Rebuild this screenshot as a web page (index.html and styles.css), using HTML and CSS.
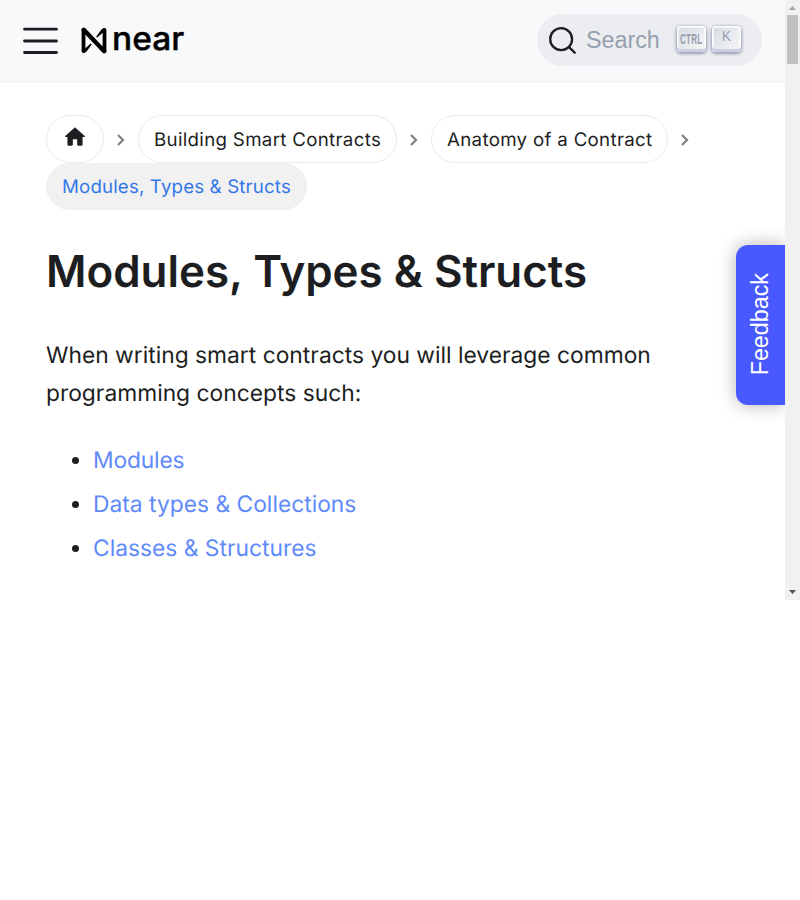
FILE: index.html
```html
<!DOCTYPE html>
<html lang="en">
<head>
<meta charset="utf-8">
<title>Modules, Types &amp; Structs</title>
<link rel="stylesheet" href="styles.css">
</head>
<body>
<div class="viewport">
  <div class="page">
    <header class="navbar">
      <svg class="menu" width="36" height="30" viewBox="0 0 36 30"><path d="M1.5 3.2H33.5M1.5 15H33.5M1.5 26.5H33.5" fill="none" stroke="#1c1e21" stroke-width="2.8" stroke-linecap="round"/></svg>
      <a class="brand">
        <svg width="26" height="27" viewBox="0 0 26 27"><path d="M2.5 3V24M23.5 3V24" fill="none" stroke="#000" stroke-width="3.8" stroke-linecap="round"/><path d="M2.8 2.8L23.2 24.2" stroke="#000" stroke-width="4.4" stroke-linecap="round"/><path d="M2.5 25.8L4 21.5L9.8 16.5L10.8 17.2L5.6 24.6Q4 26 2.5 25.8ZM23.5 1.2L22 5.5L16.2 10.5L15.2 9.8L20.4 2.4Q22 1 23.5 1.2Z" fill="#000"/></svg>
        <span class="wordmark">near</span>
      </a>
      <button class="search">
        <svg width="29" height="29" viewBox="0 0 20 20"><path d="M14.386 14.386l4.0877 4.0877-4.0877-4.0877c-2.9418 2.9419-7.7115 2.9419-10.6533 0-2.9419-2.9418-2.9419-7.7115 0-10.6533 2.9418-2.9419 7.7115-2.9419 10.6533 0 2.9419 2.9418 2.9419 7.7115 0 10.6533z" fill="none" stroke="#1c1e21" stroke-width="1.6" stroke-linejoin="round"/></svg>
        <span class="placeholder">Search</span>
        <kbd class="key"><span class="ctrl">CTRL</span></kbd>
        <kbd class="key">K</kbd>
      </button>
    </header>
    <main class="content">
      <nav class="crumbs">
        <a class="pill"><svg class="home" width="26" height="26" viewBox="0 0 24 24"><path d="M10 19v-5h4v5c0 .55.45 1 1 1h3c.55 0 1-.45 1-1v-7h1.7c.46 0 .68-.57.33-.87L12.67 3.6c-.38-.34-.96-.34-1.34 0l-8.36 7.53c-.34.3-.13.87.33.87H5v7c0 .55.45 1 1 1h3c.55 0 1-.45 1-1z" fill="#1c1e21"/></svg></a>
        <svg class="chevron" width="10" height="14" viewBox="0 0 10 14"><path d="M2 2L7 7L2 12" fill="none" stroke="#808080" stroke-width="2.2"/></svg>
        <a class="pill">Building Smart Contracts</a>
        <svg class="chevron" width="10" height="14" viewBox="0 0 10 14"><path d="M2 2L7 7L2 12" fill="none" stroke="#808080" stroke-width="2.2"/></svg>
        <a class="pill">Anatomy of a Contract</a>
        <svg class="chevron" width="10" height="14" viewBox="0 0 10 14"><path d="M2 2L7 7L2 12" fill="none" stroke="#808080" stroke-width="2.2"/></svg>
        <span class="pill active">Modules, Types &amp; Structs</span>
      </nav>
      <h1>Modules, Types &amp; Structs</h1>
      <p>When writing smart contracts you will leverage common programming concepts such:</p>
      <ul>
        <li><a class="tight">Modules</a></li>
        <li><a>Data types &amp; Collections</a></li>
        <li><a>Classes &amp; Structures</a></li>
      </ul>
    </main>
    <button class="feedback"><span>Feedback</span></button>
  </div>
  <div class="scrollbar">
    <svg width="15" height="15" viewBox="0 0 15 15"><path d="M4 10L7.5 6L11 10Z" fill="#a3a3a3"/></svg>
    <div class="thumb"></div>
    <svg class="down" width="15" height="15" viewBox="0 0 15 15"><path d="M4 5L7.5 9L11 5Z" fill="#505050"/></svg>
  </div>
</div>
</body>
</html>
```
FILE: styles.css
```css
* { box-sizing: border-box; }
body {
  margin: 0;
  background: #fff;
  color: #1c1e21;
  font-family: Inter, "Liberation Sans", sans-serif;
  text-rendering: geometricPrecision;
}
.viewport { display: flex; width: 800px; height: 600px; }
.page { position: relative; width: 785px; overflow: hidden; }
.navbar {
  display: flex;
  align-items: center;
  height: 81px;
  padding: 0 23px;
  background: #f7f9fb;
  box-shadow: 0 1px 2px rgba(0, 0, 0, 0.08);
}
.menu { flex: none; }
.brand { display: flex; align-items: center; margin-left: 22px; color: #000; }
.wordmark {
  margin: -4px 0 0 5px;
  font-size: 32.5px;
  font-weight: 500;
  line-height: 36px;
  -webkit-text-stroke: 0.4px #000;
  transform: scaleX(1.03);
  transform-origin: left;
}
.search {
  display: flex;
  align-items: center;
  width: 225px;
  height: 52px;
  margin: -1px 0 0 auto;
  padding: 0 21px 0 11px;
  border: 0;
  border-radius: 26px;
  background: #ebedf0;
  font-family: "Liberation Sans", sans-serif;
}
.placeholder {
  margin: 0 auto 0 9px;
  color: #969faf;
  font-size: 23.3px;
}
.key {
  display: flex;
  justify-content: center;
  width: 29px;
  height: 26px;
  margin: -3px 0 0 6px;
  padding-top: 1px;
  border-radius: 4px;
  background: linear-gradient(-225deg, #d5dbe4, #f8f8f8);
  box-shadow: inset 0 -3px 0 0 #cdcde6, inset 0 0 1px 1.5px #fff, 0 1px 3px 1px rgba(30, 35, 90, 0.4);
  color: #969faf;
  font: 14px/18px "Liberation Sans", sans-serif;
}
.ctrl {
  flex: none;
  font-size: 15.5px;
  font-weight: 700;
  line-height: 23px;
  letter-spacing: 0.5px;
  transform: translateX(-0.5px) scaleX(0.52);
}
.content { padding: 34px 46px 0; }
.crumbs { display: flex; flex-wrap: wrap; align-items: center; }
.pill {
  display: flex;
  align-items: center;
  justify-content: center;
  height: 47.5px;
  padding: 1px 15px 0;
  border: 1px solid #ebebeb;
  border-radius: 24px;
  font-size: 18.7px;
  letter-spacing: 0.31px;
}
.active { border-color: #f0f0f0; background: #f1f1f1; color: #3478e8; letter-spacing: 0.15px; }
.home { margin: -4px 0 0; }
.chevron { margin: 2px 12px 0; }
h1 {
  margin: 35px 0 40px;
  font-size: 43.9px;
  font-weight: 600;
  line-height: 52px;
}
p {
  margin: 0;
  font-size: 22.8px;
  line-height: 38px;
}
ul {
  margin: 29px 0 0;
  padding-left: 47px;
  font-size: 22.8px;
  line-height: 38px;
}
li + li { margin-top: 6px; }
li a { color: #5f8afa; }
.tight { letter-spacing: -0.15px; }
.feedback {
  position: absolute;
  top: 245px;
  right: 0;
  display: flex;
  align-items: center;
  justify-content: center;
  width: 49px;
  height: 160px;
  padding: 0;
  border: 0;
  border-radius: 12px 0 0 12px;
  background: #485aff;
  box-shadow: 0 0 18px rgba(0, 0, 0, 0.3);
  color: #fff;
  font: 23.3px/28px "Liberation Sans", sans-serif;
}
.feedback span { margin: -1px 1px 0 0; writing-mode: vertical-rl; transform: rotate(180deg); }
.scrollbar {
  display: flex;
  flex-direction: column;
  align-items: center;
  width: 15px;
  background: #f1f1f1;
}
.thumb { width: 11px; height: 49px; background: #c1c1c1; }
.down { margin-top: auto; }
```
